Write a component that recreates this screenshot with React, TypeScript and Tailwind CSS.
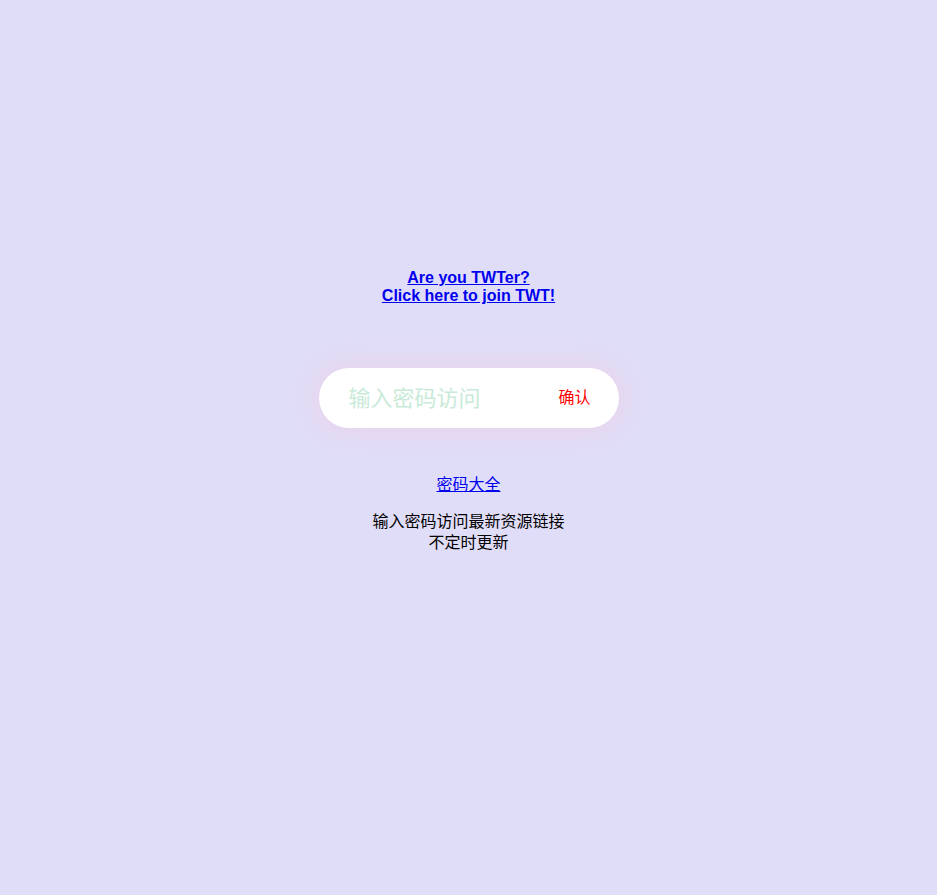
export default function App() {
  return (
    <div className="flex min-h-[895px] w-full flex-col items-center bg-[#e0ddf8] pt-[269px] font-['Liberation_Sans','Noto_Sans_CJK_SC',sans-serif] text-black">
      <a href="#" className="text-center text-base font-bold leading-[18px] text-[#0000ee] underline">
        Are you TWTer?
        <br />
        Click here to join TWT!
      </a>
      <form className="mt-[63px] flex h-[60px] w-[300px] items-center rounded-full bg-white pl-[30px] pr-[26px] shadow-[0_0_22px_6px_rgba(236,210,232,0.75)]">
        <input
          type="password"
          placeholder="输入密码访问"
          className="min-w-0 flex-1 bg-transparent text-[22px] outline-none placeholder:text-[#c9ead8]"
        />
        <button type="button" className="mr-[2px] text-base text-[#ff0000]">
          确认
        </button>
      </form>
      <a href="#" className="mt-[48px] text-base leading-[18px] text-[#0000ee] underline">
        密码大全
      </a>
      <p className="mt-[17px] text-center text-base leading-[21px]">
        输入密码访问最新资源链接
        <br />
        不定时更新
      </p>
    </div>
  );
}
